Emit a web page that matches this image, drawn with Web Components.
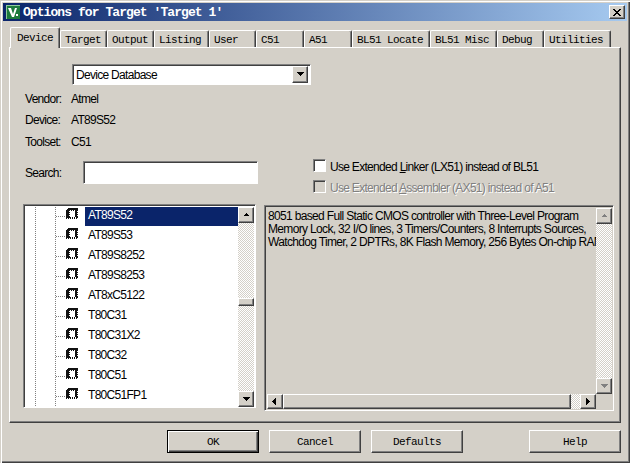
<!DOCTYPE html>
<html>
<head>
<meta charset="utf-8">
<title>Options for Target</title>
<style>
html, body { margin: 0; padding: 0; background: #d4d0c8; }
body { width: 630px; height: 463px; overflow: hidden; }
</style>
</head>
<body>
<opt-dialog heading="Options for Target 'Target 1'">
  <opt-tabs slot="tabs">
    <opt-tab w="50" active>Device</opt-tab>
    <opt-tab w="47">Target</opt-tab>
    <opt-tab w="47">Output</opt-tab>
    <opt-tab w="55">Listing</opt-tab>
    <opt-tab w="47">User</opt-tab>
    <opt-tab w="48">C51</opt-tab>
    <opt-tab w="48">A51</opt-tab>
    <opt-tab w="78">BL51 Locate</opt-tab>
    <opt-tab w="67">BL51 Misc</opt-tab>
    <opt-tab w="47">Debug</opt-tab>
    <opt-tab w="67">Utilities</opt-tab>
  </opt-tabs>
  <device-page></device-page>
  <opt-button slot="footer" default>OK</opt-button>
  <opt-button slot="footer">Cancel</opt-button>
  <opt-button slot="footer">Defaults</opt-button>
  <opt-button slot="footer" style="margin-left:56px">Help</opt-button>
</opt-dialog>

<script>
const FACE = '#d4d0c8';
const UI_FONT = '"Liberation Sans", Arial, sans-serif';
const MONO_FONT = '"Liberation Mono", "DejaVu Sans Mono", monospace';

// raised 3d edge used by buttons and scrollbar parts
const RAISED = `
    border: 1px solid; border-color: #fff #404040 #404040 #fff;
    box-shadow: inset -1px -1px 0 #808080;
    background: ${FACE};
    box-sizing: border-box;
`;
const SUNKEN = `
    border: 1px solid; border-color: #808080 #fff #fff #808080;
    box-shadow: inset 1px 1px 0 #404040;
    box-sizing: border-box;
`;

// chip icon, one string per pixel row
const CHIP = [
    '..##########',
    '.###########',
    '####.#.#.###',
    '###......##.',
    '####.....###',
    '###......##.',
    '####.....###',
    '###......##.',
    '####.....###',
    '#####.#.#.##',
    '#.#.#.#.#.#.'
];

class OptDialog extends HTMLElement {
    constructor() {
        super();
        this.attachShadow({ mode: 'open' });
    }

    connectedCallback() {
        const heading = this.getAttribute('heading') || '';
        this.shadowRoot.innerHTML = `
            <style>
                :host {
                    display: flex;
                    flex-direction: column;
                    width: 630px;
                    height: 463px;
                    box-sizing: border-box;
                    padding: 3px 2px 2px 3px;
                    background: ${FACE};
                    box-shadow: inset 1px 1px 0 ${FACE}, inset 2px 2px 0 #fff,
                                inset -1px -1px 0 #404040, inset -2px -2px 0 #808080;
                    font: 12px ${UI_FONT};
                    letter-spacing: -0.7px;
                    color: #000;
                }
                .title {
                    height: 18px;
                    flex: none;
                    display: flex;
                    align-items: center;
                    background: linear-gradient(90deg, #0a246a, #a6caf0);
                    color: #fff;
                    padding: 0 2px 0 3px;
                    margin-right: 1px;
                }
                .title svg { flex: none; }
                .title .logo { margin-right: 3px; }
                .title span {
                    flex: 1;
                    font: bold 13px ${MONO_FONT};
                    letter-spacing: -0.93px;
                    white-space: pre;
                }
                .close {
                    ${RAISED}
                    width: 16px;
                    height: 14px;
                    display: flex;
                    align-items: center;
                    justify-content: center;
                }
                .tabs { margin: 6px 0 0 7px; flex: none; position: relative; z-index: 1; }
                .page { margin: 0 0 0 6px; flex: none; }
                .footer {
                    display: flex;
                    gap: 10px;
                    margin: 7px 0 0 164px;
                }
            </style>
            <div class="title">
                <svg class="logo" width="14" height="14" viewBox="0 0 14 14" shape-rendering="crispEdges">
                    <rect width="14" height="14" fill="#1d7a3c"/>
                    <rect x="0" y="0" width="14" height="1" fill="#8fc89c"/>
                    <rect x="0" y="0" width="1" height="14" fill="#8fc89c"/>
                    <path d="M2 3h3l2 6 2-6h2l-3 9H6z" fill="#fff" shape-rendering="auto"/>
                    <rect x="10" y="9" width="2" height="2" fill="#fff"/>
                </svg>
                <span>${heading}</span>
                <div class="close">
                    <svg width="10" height="9" viewBox="0 0 10 9" shape-rendering="crispEdges">
                        <path d="M1 1h2v1h1v1h2V2h1V1h2v1H8v1H7v1H6v1h1v1h1v1h1v1H7V7H6V6H4v1H3v1H1V7h1V6h1V5h1V4H3V3H2V2H1z" fill="#000"/>
                    </svg>
                </div>
            </div>
            <div class="tabs"><slot name="tabs"></slot></div>
            <div class="page"><slot></slot></div>
            <div class="footer"><slot name="footer"></slot></div>
        `;
    }
}

class OptTabs extends HTMLElement {
    constructor() {
        super();
        this.attachShadow({ mode: 'open' });
        this.shadowRoot.innerHTML = `
            <style>
                :host { display: flex; align-items: flex-end; height: 20px; }
            </style>
            <slot></slot>
        `;
    }
}

class OptTab extends HTMLElement {
    constructor() {
        super();
        this.attachShadow({ mode: 'open' });
        this.shadowRoot.innerHTML = `
            <style>
                :host {
                    display: block;
                    box-sizing: border-box;
                    height: 17px;
                    padding: 3px 0 0 4px;
                    background: ${FACE};
                    border-left: 1px solid #fff;
                    border-top: 1px solid #fff;
                    border-right: 1px solid #404040;
                    border-radius: 2px 2px 0 0;
                    box-shadow: inset -1px 0 0 #808080;
                    font: 11px/12px ${MONO_FONT};
                    letter-spacing: -0.6px;
                    color: #000;
                }
                :host([active]) {
                    height: 21px;
                    margin-bottom: -1px;
                    padding: 4px 0 0 6px;
                    position: relative;
                    z-index: 1;
                }
            </style>
            <slot></slot>
        `;
    }

    connectedCallback() {
        this.style.width = this.getAttribute('w') + 'px';
    }
}

class OptButton extends HTMLElement {
    constructor() {
        super();
        this.attachShadow({ mode: 'open' });
        this.shadowRoot.innerHTML = `
            <style>
                :host {
                    ${RAISED}
                    display: flex;
                    align-items: center;
                    justify-content: center;
                    width: 92px;
                    height: 23px;
                    font: 11px ${MONO_FONT};
                    letter-spacing: -0.6px;
                    color: #000;
                }
                :host([default]) {
                    border-color: #000;
                    box-shadow: inset 1px 1px 0 #fff, inset -1px -1px 0 #404040, inset -2px -2px 0 #808080;
                }
            </style>
            <slot></slot>
        `;
    }
}

class OptArrow extends HTMLElement {
    constructor() {
        super();
        this.attachShadow({ mode: 'open' });
    }

    connectedCallback() {
        const dir = this.getAttribute('dir');
        const off = this.hasAttribute('off');
        const paths = {
            up: 'M4 1h1v1h1v1h1v1H2V3h1V2h1z',
            down: 'M1 1h7v1H7v1H6v1H5v1H4V4H3V3H2V2H1z',
            left: 'M4 0h1v7H4V6H3V5H2V4H1V3h1V2h1V1h1z',
            right: 'M2 0h1v1h1v1h1v1h1v1H5v1H4v1H3v1H2z'
        };
        this.shadowRoot.innerHTML = `
            <style>
                :host { ${RAISED} display: flex; align-items: center; justify-content: center; flex: none; width: 16px; height: 16px; }
                svg { display: block; }
            </style>
            <svg width="9" height="7" viewBox="0 0 9 7" shape-rendering="crispEdges">
                <path d="${paths[dir]}" fill="${off ? '#808080' : '#000'}"/>
            </svg>
        `;
    }
}

class OptScrollbar extends HTMLElement {
    constructor() {
        super();
        this.attachShadow({ mode: 'open' });
    }

    connectedCallback() {
        const horizontal = this.getAttribute('orient') === 'h';
        const off = this.hasAttribute('off') ? 'off' : '';
        const [a, b] = horizontal ? ['left', 'right'] : ['up', 'down'];
        const before = this.getAttribute('before');
        const size = this.getAttribute('thumb');
        const track = `<div class="track"></div>`;
        let mid = track;
        if (size) {
            const thumb = `<div class="thumb" style="flex:0 0 ${size}px"></div>`;
            mid = +before ? `<div class="track" style="flex:0 0 ${before}px"></div>${thumb}${track}` : `${thumb}${track}`;
        }
        this.shadowRoot.innerHTML = `
            <style>
                :host {
                    display: flex;
                    flex-direction: ${horizontal ? 'row' : 'column'};
                    flex: none;
                    ${horizontal ? 'height: 15px;' : 'width: 16px;'}
                }
                opt-arrow { ${horizontal ? 'height: 15px;' : ''} }
                .track {
                    flex: 1;
                    background-image: conic-gradient(${FACE} 25%, #fff 0 50%, ${FACE} 0 75%, #fff 0);
                    background-size: 2px 2px;
                }
                .thumb { ${RAISED} box-shadow: inset -1px -1px 0 #808080; }
            </style>
            <opt-arrow dir="${a}" ${off}></opt-arrow>
            ${mid}
            <opt-arrow dir="${b}" ${off}></opt-arrow>
        `;
    }
}

class OptCheck extends HTMLElement {
    constructor() {
        super();
        this.attachShadow({ mode: 'open' });
        this.shadowRoot.innerHTML = `
            <style>
                :host {
                    display: flex;
                    align-items: center;
                    gap: 4px;
                    height: 13px;
                    white-space: nowrap;
                }
                span { padding-top: 2px; }
                .box { ${SUNKEN} width: 13px; height: 13px; flex: none; background: #fff; }
                :host([disabled]) .box { background: ${FACE}; }
                :host([disabled]) { color: #808080; text-shadow: 1px 1px 0 #fff; }
            </style>
            <div class="box"></div>
            <span><slot></slot></span>
        `;
    }
}

class OptCombo extends HTMLElement {
    constructor() {
        super();
        this.attachShadow({ mode: 'open' });
        this.shadowRoot.innerHTML = `
            <style>
                :host {
                    ${SUNKEN}
                    display: flex;
                    align-items: center;
                    width: 239px;
                    height: 21px;
                    padding: 2px;
                    background: #fff;
                }
                span { flex: 1; padding-left: 1px; }
                opt-arrow { height: 17px; }
            </style>
            <span><slot></slot></span>
            <opt-arrow dir="down"></opt-arrow>
        `;
    }
}

class ChipIcon extends HTMLElement {
    constructor() {
        super();
        this.attachShadow({ mode: 'open' });
        const d = CHIP.map((row, y) => [...row].map((c, x) => c === '#' ? `M${x} ${y}h1v1h-1z` : '').join('')).join('');
        this.shadowRoot.innerHTML = `
            <style>:host { display: block; width: 13px; height: 13px; flex: none; } svg { display: block; }</style>
            <svg width="13" height="13" viewBox="0 0 13 13" shape-rendering="crispEdges">
                <path d="${d}" fill="#111"/>
            </svg>
        `;
    }
}

class TreeRow extends HTMLElement {
    constructor() {
        super();
        this.attachShadow({ mode: 'open' });
        this.shadowRoot.innerHTML = `
            <style>
                :host {
                    display: flex;
                    height: 20px;
                    position: relative;
                }
                .guide {
                    width: 1px;
                    background-image: repeating-linear-gradient(#808080 0 1px, transparent 1px 2px);
                    flex: none;
                }
                .one { margin-left: 10px; }
                .two { margin-left: 19px; }
                .elbow {
                    width: 10px;
                    height: 1px;
                    margin-top: 9px;
                    flex: none;
                    background-image: repeating-linear-gradient(90deg, #808080 0 1px, transparent 1px 2px);
                }
                chip-icon { margin: 1px 0 0 0; }
                .label {
                    flex: 1;
                    height: 19px;
                    margin-left: 6px;
                    padding-left: 3px;
                    line-height: 17px;
                    color: #000;
                }
                :host([selected]) .label { background: #0a246a; color: #fff; }
            </style>
            <div class="guide one"></div>
            <div class="guide two"></div>
            <div class="elbow"></div>
            <chip-icon></chip-icon>
            <div class="label"><slot></slot></div>
        `;
    }
}

class DeviceTree extends HTMLElement {
    constructor() {
        super();
        this.attachShadow({ mode: 'open' });
        this.shadowRoot.innerHTML = `
            <style>
                :host {
                    ${SUNKEN}
                    display: flex;
                    width: 233px;
                    height: 204px;
                    padding: 2px 1px 1px 1px;
                    background: #fff;
                }
                .rows { flex: 1; overflow: hidden; }
                opt-scrollbar { height: 200px; }
            </style>
            <div class="rows"><slot></slot></div>
            <opt-scrollbar before="75" thumb="8"></opt-scrollbar>
        `;
    }
}

class DescBox extends HTMLElement {
    constructor() {
        super();
        this.attachShadow({ mode: 'open' });
        this.shadowRoot.innerHTML = `
            <style>
                :host {
                    ${SUNKEN}
                    display: grid;
                    grid-template-columns: 329px 16px;
                    grid-template-rows: 186px 15px;
                    width: 350px;
                    height: 206px;
                    padding: 2px;
                    background: ${FACE};
                }
                .text {
                    overflow: hidden;
                    padding: 2px 0 0 1px;
                    line-height: 13px;
                    letter-spacing: -0.66px;
                    white-space: pre;
                    color: #000;
                }
                .hbar { grid-column: 1; grid-row: 2; }
            </style>
            <div class="text"><slot></slot></div>
            <opt-scrollbar off></opt-scrollbar>
            <opt-scrollbar class="hbar" orient="h" thumb="288"></opt-scrollbar>
        `;
    }
}

class DevicePage extends HTMLElement {
    constructor() {
        super();
        this.attachShadow({ mode: 'open' });
        const rows = ['AT89S52', 'AT89S53', 'AT89S8252', 'AT89S8253', 'AT8xC5122',
            'T80C31', 'T80C31X2', 'T80C32', 'T80C51', 'T80C51FP1'];
        const info = [['Vendor:', 'Atmel', 21], ['Device:', 'AT89S52', 22], ['Toolset:', 'C51', 21]];
        this.shadowRoot.innerHTML = `
            <style>
                :host {
                    display: block;
                    box-sizing: border-box;
                    width: 612px;
                    height: 376px;
                    padding: 16px 0 0 0;
                    border: 1px solid;
                    border-color: #fff #404040 #404040 #fff;
                    box-shadow: inset -1px -1px 0 #808080;
                    background: ${FACE};
                    color: #000;
                }
                opt-combo { margin-left: 62px; }
                .info { margin: 3px 0 0 15px; height: 63px; }
                .info div { display: flex; align-items: center; }
                .info b { font-weight: normal; width: 46px; }
                .mid { display: flex; height: 45px; margin-top: 8px; padding-left: 15px; }
                .search { display: flex; margin-top: 2px; height: 23px; align-items: center; }
                .search label { width: 58px; padding-top: 1px; }
                .input { ${SUNKEN} width: 175px; height: 23px; background: #fff; }
                .checks { display: flex; flex-direction: column; gap: 8px; margin-left: 55px; }
                .bottom { display: flex; gap: 8px; padding-left: 13px; }
                desc-box { margin-top: 1px; }
                u { text-decoration: underline; }
            </style>
            <opt-combo>Device Database</opt-combo>
            <div class="info">
                ${info.map(i => `<div style="height:${i[2]}px"><b>${i[0]}</b><span>${i[1]}</span></div>`).join('')}
            </div>
            <div class="mid">
                <div class="search"><label>Search:</label><div class="input"></div></div>
                <div class="checks">
                    <opt-check>Use Extended <u>L</u>inker (LX51) instead of BL51</opt-check>
                    <opt-check disabled>Use Extended <u>A</u>ssembler (AX51) instead of A51</opt-check>
                </div>
            </div>
            <div class="bottom">
                <device-tree>
                    ${rows.map((r, i) => `<tree-row ${i === 0 ? 'selected' : ''}>${r}</tree-row>`).join('')}
                </device-tree>
                <desc-box>8051 based Full Static CMOS controller with Three-Level Program
Memory Lock, 32 I/O lines, 3 Timers/Counters, 8 Interrupts Sources,
Watchdog Timer, 2 DPTRs, 8K Flash Memory, 256 Bytes On-chip RAM</desc-box>
            </div>
        `;
    }
}

customElements.define('opt-dialog', OptDialog);
customElements.define('opt-tabs', OptTabs);
customElements.define('opt-tab', OptTab);
customElements.define('opt-button', OptButton);
customElements.define('opt-arrow', OptArrow);
customElements.define('opt-scrollbar', OptScrollbar);
customElements.define('opt-check', OptCheck);
customElements.define('opt-combo', OptCombo);
customElements.define('chip-icon', ChipIcon);
customElements.define('tree-row', TreeRow);
customElements.define('device-tree', DeviceTree);
customElements.define('desc-box', DescBox);
customElements.define('device-page', DevicePage);
</script>
</body>
</html>
